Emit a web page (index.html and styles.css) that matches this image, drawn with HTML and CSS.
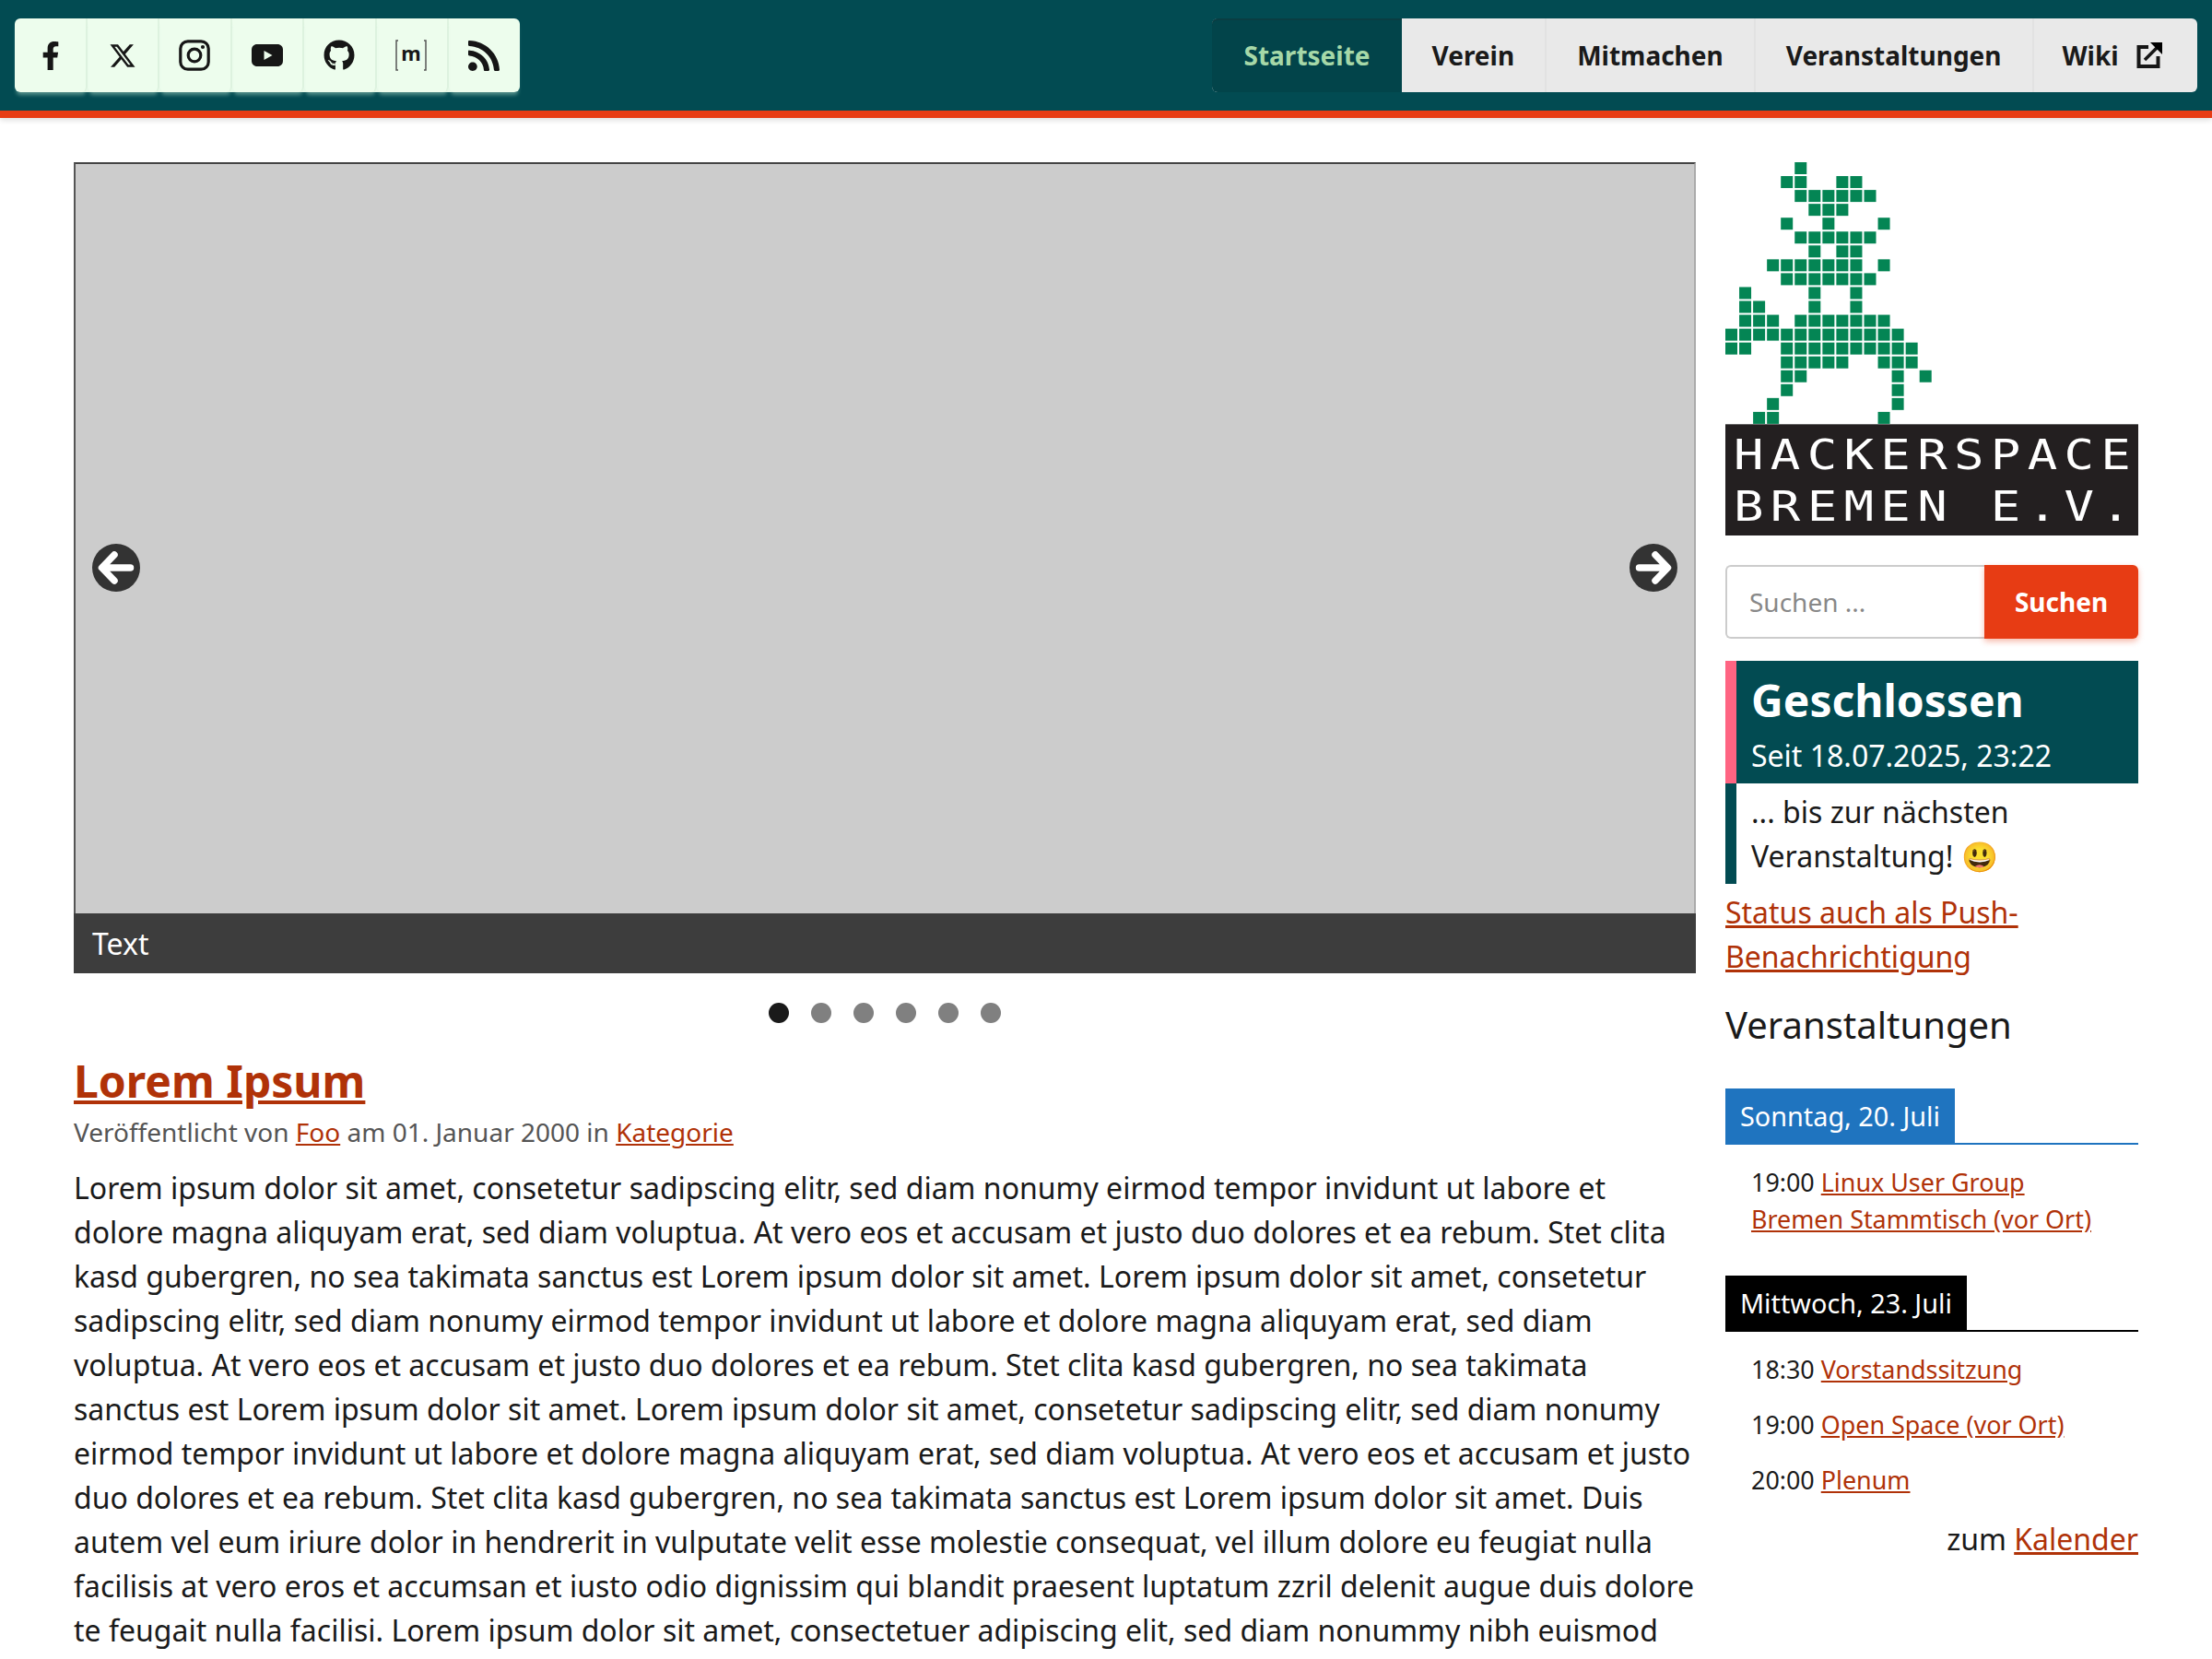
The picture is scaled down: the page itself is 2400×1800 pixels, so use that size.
FILE: index.html
```html
<!DOCTYPE html>
<html lang="de">
<head>
  <meta charset="utf-8">
  <title>Hackerspace Bremen e.V.</title>
  <link rel="stylesheet" href="styles.css">
</head>
<body>
  <header id="topbar">
    <nav class="social">
      <a href="#"><svg class="ico-f" viewBox="0 0 320 512"><path d="M279.14 288l14.22-92.66h-88.91v-60.13c0-25.35 12.42-50.06 52.24-50.06h40.42V6.26S260.43 0 225.36 0c-73.22 0-121.08 44.38-121.08 124.72v70.62H22.89V288h81.39v224h100.17V288z"/></svg></a>
      <a href="#"><svg class="ico-x" viewBox="0 0 24 24"><path d="M18.901 1.153h3.68l-8.04 9.19L24 22.846h-7.406l-5.8-7.584-6.638 7.584H.474l8.6-9.83L0 1.154h7.594l5.243 6.932ZM17.61 20.644h2.039L6.486 3.24H4.298Z"/></svg></a>
      <a href="#"><svg class="ico-34" viewBox="0 0 34 34"><rect x="1.8" y="1.8" width="30.4" height="30.4" rx="8" fill="none" stroke="#161616" stroke-width="3.2"/><circle cx="17" cy="17" r="6.8" fill="none" stroke="#161616" stroke-width="3.2"/><circle cx="26" cy="8" r="2.1"/></svg></a>
      <a href="#"><svg class="ico-yt" viewBox="0 0 34 24"><path d="M6 0h22c3.5 0 6 2.5 6 6v12c0 3.500-2.500 6-6 6H6c-3.500 0-6-2.500-6-6V6c0-3.500 2.500-6 6-6z"/><path d="M13.500 7l9 5-9 5z" fill="#edfded"/></svg></a>
      <a href="#"><svg class="ico-34" viewBox="0 0 496 512"><path d="M165.9 397.4c0 2-2.3 3.6-5.2 3.6-3.3 0-5.6-1.6-5.6-3.6 0-2 2.3-3.6 5.2-3.6 3-.3 5.6 1.3 5.6 3.6zm-31.1-4.5c-.7 2 1.3 4.3 4.3 4.9 2.6 1 5.6 0 6.2-2s-1.3-4.3-4.3-5.2c-2.6-.7-5.5.3-6.2 2.3zm44.2-1.7c-2.9.7-4.9 2.6-4.6 4.9.3 2 2.9 3.3 5.9 2.6 2.9-.7 4.9-2.6 4.6-4.6-.3-1.9-3-3.2-5.9-2.9zM244.8 8C106.1 8 0 113.3 0 252c0 110.9 69.800 205.800 169.500 239.200 12.800 2.300 17.300-5.600 17.300-12.100 0-6.200-.3-40.400-.3-61.400 0 0-70 15-84.700-29.800 0 0-11.400-29.100-27.800-36.600 0 0-22.900-15.700 1.600-15.400 0 0 24.900 2 38.600 25.800 21.900 38.600 58.600 27.500 72.900 20.900 2.300-16 8.800-27.100 16-33.700-55.900-6.200-112.300-14.300-112.300-110.500 0-27.500 7.600-41.300 23.600-58.900-2.600-6.500-11.100-33.300 2.600-67.900 20.900-6.500 69 27 69 27 20-5.600 41.500-8.500 62.800-8.500s42.800 2.900 62.800 8.500c0 0 48.100-33.600 69-27 13.700 34.700 5.200 61.400 2.600 67.900 16 17.700 25.800 31.500 25.800 58.900 0 96.500-58.900 104.200-114.800 110.500 9.200 7.900 17 22.900 17 46.400 0 33.700-.3 75.400-.3 83.600 0 6.500 4.600 14.400 17.300 12.100C428.200 457.800 496 362.900 496 252 496 113.300 383.500 8 244.800 8z"/></svg></a>
      <a href="#"><svg class="ico-34" viewBox="0 0 34 34"><path d="M3 1H1v32h2M31 1h2v32h-2" fill="none" stroke="#555" stroke-width="1.500"/><text class="matrix-m" x="17" y="23" text-anchor="middle">m</text></svg></a>
      <a href="#"><svg class="ico-rss" viewBox="0 32 448 448" preserveAspectRatio="none"><path d="M128.081 415.959c0 35.369-28.672 64.041-64.041 64.041S0 451.328 0 415.959s28.672-64.041 64.041-64.041 64.04 28.673 64.04 64.041zm175.66 47.25c-8.354-154.6-132.185-278.587-286.95-286.95C7.656 175.765 0 183.105 0 192.253v48.069c0 8.415 6.49 15.472 14.887 16.018 111.832 7.284 201.473 96.702 208.772 208.772.547 8.397 7.604 14.887 16.018 14.887h48.069c9.149.001 16.489-7.655 15.995-16.79zm144.249.288C439.596 229.677 251.465 40.445 16.503 32.01 7.473 31.686 0 38.981 0 48.016v48.068c0 8.625 6.835 15.645 15.453 15.999 191.179 7.839 344.627 161.316 352.465 352.465.353 8.618 7.373 15.453 15.999 15.453h48.068c9.034-.001 16.329-7.474 16.005-16.504z"/></svg></a>
    </nav>
    <nav class="mainmenu">
      <a class="active" href="#">Startseite</a>
      <a href="#">Verein</a>
      <a href="#">Mitmachen</a>
      <a href="#">Veranstaltungen</a>
      <a href="#">Wiki <svg class="ico-ext" viewBox="0 0 28 28"><path d="M13 5H2.500v21h21V15" fill="none" stroke="#161616" stroke-width="4"/><path d="M9 19L24 4" fill="none" stroke="#161616" stroke-width="3.500"/><path d="M15 0h13v13z"/></svg></a>
    </nav>
  </header>

  <div id="page">
    <main>
      <section class="slider">
        <div class="slide"></div>
        <div class="caption">Text</div>
        <span class="arrow arrow-left"><svg viewBox="0 0 52 52"><path d="M41.500 26H11M24 12L10.500 26 24 40" fill="none" stroke="#fff" stroke-width="7.500" stroke-linecap="round" stroke-linejoin="round"/></svg></span>
        <span class="arrow arrow-right"><svg viewBox="0 0 52 52"><path d="M10.500 26H41M28 12l13.500 14L28 40" fill="none" stroke="#fff" stroke-width="7.500" stroke-linecap="round" stroke-linejoin="round"/></svg></span>
      </section>
      <div class="dots">
        <span class="current"></span><span></span><span></span><span></span><span></span><span></span>
      </div>
      <article>
        <h1><a href="#">Lorem Ipsum</a></h1>
        <p class="meta">Veröffentlicht von <a href="#">Foo</a> am 01. Januar 2000 in <a href="#">Kategorie</a></p>
        <p class="text">Lorem ipsum dolor sit amet, consetetur sadipscing elitr, sed diam nonumy eirmod tempor invidunt ut labore et dolore magna aliquyam erat, sed diam voluptua. At vero eos et accusam et justo duo dolores et ea rebum. Stet clita kasd gubergren, no sea takimata sanctus est Lorem ipsum dolor sit amet. Lorem ipsum dolor sit amet, consetetur sadipscing elitr, sed diam nonumy eirmod tempor invidunt ut labore et dolore magna aliquyam erat, sed diam voluptua. At vero eos et accusam et justo duo dolores et ea rebum. Stet clita kasd gubergren, no sea takimata sanctus est Lorem ipsum dolor sit amet. Lorem ipsum dolor sit amet, consetetur sadipscing elitr, sed diam nonumy eirmod tempor invidunt ut labore et dolore magna aliquyam erat, sed diam voluptua. At vero eos et accusam et justo duo dolores et ea rebum. Stet clita kasd gubergren, no sea takimata sanctus est Lorem ipsum dolor sit amet. Duis autem vel eum iriure dolor in hendrerit in vulputate velit esse molestie consequat, vel illum dolore eu feugiat nulla facilisis at vero eros et accumsan et iusto odio dignissim qui blandit praesent luptatum zzril delenit augue duis dolore te feugait nulla facilisi. Lorem ipsum dolor sit amet, consectetuer adipiscing elit, sed diam nonummy nibh euismod</p>
      </article>
    </main>

    <aside>
      <div class="logo">
        <svg class="logo-pixels" viewBox="0 0 224 284">
          <g id="pixel-group"></g>
        </svg>
        <div class="logo-name"><span>HACKERSPACE</span><span>BREMEN E.V.</span></div>
      </div>
      <form class="search">
        <input type="text" placeholder="Suchen ...">
        <button type="button">Suchen</button>
      </form>
      <div class="status">
        <div class="status-head">
          <h2>Geschlossen</h2>
          <div>Seit 18.07.2025, 23:22</div>
        </div>
        <div class="status-body">... bis zur nächsten Veranstaltung! 😃</div>
      </div>
      <p class="push"><a href="#">Status auch als Push-Benachrichtigung</a></p>
      <h3>Veranstaltungen</h3>
      <div class="day day-blue"><span>Sonntag, 20. Juli</span></div>
      <ul class="events">
        <li>19:00 <a href="#">Linux User Group Bremen Stammtisch (vor Ort)</a></li>
      </ul>
      <div class="day day-black"><span>Mittwoch, 23. Juli</span></div>
      <ul class="events">
        <li>18:30 <a href="#">Vorstandssitzung</a></li>
        <li>19:00 <a href="#">Open Space (vor Ort)</a></li>
        <li>20:00 <a href="#">Plenum</a></li>
      </ul>
      <p class="calendar">zum <a href="#">Kalender</a></p>
    </aside>
  </div>

  <script src="logo.js"></script>
</body>
</html>
```

FILE: styles.css
```css
html, body {
  margin: 0;
  padding: 0;
}
body {
  font-family: "Noto Sans", sans-serif;
  font-size: 32px;
  line-height: 48px;
  color: #1a1a1a;
  background: #fff;
  overflow: hidden;
  height: 1800px;
}
a {
  color: #b03208;
}

/* top bar */
#topbar {
  display: flex;
  justify-content: space-between;
  align-items: flex-start;
  height: 100px;
  padding: 20px 16px 0;
  background: #024b52;
  border-bottom: 8px solid #e73c14;
  box-shadow: 0 2px 6px rgba(0, 0, 0, .15);
}
.social {
  display: flex;
  height: 80px;
  border-radius: 6px;
  background: #edfded;
  width: 548px;
}
.social a {
  flex: 1;
  display: flex;
  align-items: center;
  justify-content: center;
  border-right: 2px solid #dff3e0;
  box-shadow: 0 5px 4px -2px rgba(190, 230, 210, .45);
  border-radius: 0 0 6px 6px;
}
.social a:last-child {
  border-right: 0;
}
.social a:nth-child(n+5) svg {
  margin-left: -2px;
}
.social svg {
  fill: #161616;
  display: block;
}
.ico-f { height: 31px; width: 20px; margin-left: 2px; }
.ico-x { height: 27px; width: 28px; }
.ico-34 { height: 34px; width: 34px; }
.ico-yt { height: 24px; width: 34px; }
.ico-rss { height: 33px; width: 34px; }
.matrix-m {
  font: bold 22px "Noto Sans", sans-serif;
}
.mainmenu {
  display: flex;
  height: 80px;
  background: #e9e9e9;
  border-radius: 6px;
  font-size: 28px;
  font-weight: 700;
  line-height: 80px;
}
.mainmenu a {
  display: block;
  padding: 0 33px;
  color: #1a1a1a;
  text-decoration: none;
  border-right: 2px solid #e2e2e2;
}
.mainmenu a:last-child {
  border-right: 0;
  padding: 0 38px 0 31px;
}
.mainmenu a.active {
  padding: 0 34px 0 35px;
  background: #02444a;
  color: #a6d8a8;
  border: 0;
  border-radius: 6px 0 0 6px;
  box-shadow: inset 0 2px 0 #0a3d42;
}
.ico-ext {
  width: 28px;
  height: 28px;
  margin-left: 12px;
  vertical-align: -3px;
}

/* page */
#page {
  display: grid;
  grid-template-columns: 1760px 448px;
  gap: 32px;
  padding: 48px 80px 0;
}

/* slider */
.slider {
  position: relative;
  height: 880px;
  display: flex;
  flex-direction: column;
}
.slide {
  flex: 1;
  background: #ccc;
  border: 2px solid;
  border-color: #444 #aaa transparent #555;
  border-bottom: 0;
}
.caption {
  height: 65px;
  padding-left: 20px;
  background: #3d3d3d;
  color: #fff;
  line-height: 66px;
}
.arrow {
  position: absolute;
  top: 414px;
  width: 52px;
  height: 52px;
  border-radius: 50%;
  background: #333;
}
.arrow svg {
  display: block;
}
.arrow-left { left: 20px; }
.arrow-right { right: 20px; }
.dots {
  display: flex;
  justify-content: center;
  gap: 24px;
  margin-top: 32px;
}
.dots span {
  width: 22px;
  height: 22px;
  border-radius: 50%;
  background: #808080;
}
.dots .current {
  background: #1a1a1a;
}

/* article */
article h1 {
  margin: 29px 0 0;
  font-size: 48px;
  line-height: 67px;
  font-weight: 700;
}
.meta {
  margin: 1px 0 0;
  font-size: 28px;
  line-height: 42px;
  color: #555;
}
.text {
  margin: 16px 0 0;
}

/* sidebar */
.logo-pixels {
  display: block;
  width: 224px;
  height: 284px;
}
#pixel-group rect {
  fill: #048554;
}
.logo-name {
  height: 121px;
  box-sizing: border-box;
  padding: 5px 0 0 9px;
  background: #231f20;
  border-top: 1px solid #666;
  color: #fff;
  font-family: "DejaVu Sans Mono", monospace;
  font-size: 45px;
  line-height: 56px;
  letter-spacing: 6.1px;
  white-space: nowrap;
}
.logo-name span {
  display: block;
  transform: scaleX(1.2);
  transform-origin: left;
}
.search {
  display: flex;
  margin-top: 32px;
  height: 80px;
}
.search input {
  flex: 1;
  min-width: 0;
  box-sizing: border-box;
  height: 80px;
  padding: 0 24px;
  border: 2px solid #ccc;
  border-right: 0;
  border-radius: 6px 0 0 6px;
  font: 28px "Noto Sans", sans-serif;
  color: #1a1a1a;
}
.search input::placeholder {
  color: #888;
}
.search button {
  width: 167px;
  border: 0;
  border-radius: 0 6px 6px 0;
  background: #e73c14;
  color: #fff;
  font: 700 28px "Noto Sans", sans-serif;
  box-shadow: 0 3px 6px rgba(231, 60, 20, .35);
}
.status {
  margin-top: 24px;
}
.status-head {
  padding: 7px 16px 6px;
  background: #024b52;
  border-left: 12px solid #ff6482;
  color: #fff;
}
.status-head h2 {
  margin: 0;
  font-size: 48px;
  line-height: 72px;
  font-weight: 700;
}
.status-body {
  padding: 7px 16px 6px;
  border-left: 12px solid #024b52;
}
.push {
  margin: 7px 0 0;
}
aside h3 {
  margin: 20px 0 0;
  font-size: 40px;
  line-height: 60px;
  font-weight: 400;
}
.day {
  margin-top: 39px;
  border-bottom: 2px solid;
  height: 59px;
  font-size: 28.8px;
}
.day span {
  display: inline-block;
  height: 61px;
  padding: 0 16px;
  color: #fff;
  line-height: 60px;
}
.day-blue { color: #1f74bf; }
.day-blue span { background: #1f74bf; }
.day-black { color: #000; margin-top: 41px; }
.day-black span { background: #000; }
.events {
  list-style: none;
  margin: 21px 0 0;
  padding: 0 28px;
  font-size: 26.9px;
  line-height: 40px;
}
.events li {
  margin-bottom: 20px;
}
.calendar {
  margin: 0;
  text-align: right;
}
```

FILE: logo.js
```js
// pixel figure of the logo: row -> columns
var rows = [
  [5], [4, 5, 8, 9], [5, 6, 7, 8, 9, 10], [6, 7, 8], [4, 7, 11],
  [5, 6, 7, 8, 9, 10], [6, 8, 9], [3, 4, 5, 6, 7, 8, 9, 11],
  [4, 5, 6, 7, 8, 9, 10], [1, 6, 9], [1, 2, 6, 9],
  [1, 2, 3, 5, 6, 7, 8, 9, 10, 11],
  [0, 1, 2, 3, 4, 5, 6, 7, 8, 9, 10, 11, 12],
  [0, 1, 4, 5, 6, 7, 8, 9, 10, 11, 12, 13],
  [4, 5, 6, 7, 8, 11, 12, 13], [4, 5, 12, 14], [4, 12], [3, 12], [2, 3, 11]
];
var group = document.getElementById("pixel-group");
rows.forEach(function(cols, y) {
  cols.forEach(function(x) {
    var r = document.createElementNS("http://www.w3.org/2000/svg", "rect");
    r.setAttribute("x", x * 15.05);
    r.setAttribute("y", y * 15.05);
    r.setAttribute("width", 13);
    r.setAttribute("height", 13);
    group.appendChild(r);
  });
});
```
